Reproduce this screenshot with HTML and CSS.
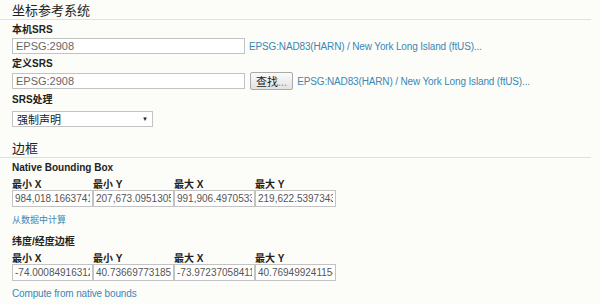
FILE: index.html
```html
<!DOCTYPE html>
<html lang="zh">
<head>
    <meta charset="UTF-8">
    <title>坐标参考系统</title>
    <link rel="stylesheet" href="styles.css">
</head>
<body>
    <div class="page">
        <h2 class="section-title">坐标参考系统</h2>
        <div class="section-body">
            <label class="field-label">本机SRS</label>
            <div class="srs-row">
                <input class="srs-input" type="text" value="EPSG:2908">
                <a class="link srs-link" href="#">EPSG:NAD83(HARN) / New York Long Island (ftUS)...</a>
            </div>

            <label class="field-label">定义SRS</label>
            <div class="srs-row">
                <input class="srs-input" type="text" value="EPSG:2908">
                <button class="find-btn">查找<span class="dots">...</span></button>
                <a class="link srs-link" href="#">EPSG:NAD83(HARN) / New York Long Island (ftUS)...</a>
            </div>

            <label class="field-label">SRS处理</label>
            <div class="select-box">
                <span>强制声明</span>
                <span class="arrow">▼</span>
            </div>
        </div>

        <h2 class="section-title bounds-title">边框</h2>
        <div class="section-body">
            <div class="field-label">Native Bounding Box</div>
            <div class="bbox">
                <div class="bbox-col">
                    <label class="field-label">最小 X</label>
                    <input class="bbox-input" type="text" value="984,018.16637415">
                </div>
                <div class="bbox-col">
                    <label class="field-label">最小 Y</label>
                    <input class="bbox-input" type="text" value="207,673.09513056">
                </div>
                <div class="bbox-col">
                    <label class="field-label">最大 X</label>
                    <input class="bbox-input" type="text" value="991,906.49705338">
                </div>
                <div class="bbox-col">
                    <label class="field-label">最大 Y</label>
                    <input class="bbox-input" type="text" value="219,622.53973435">
                </div>
            </div>
            <a class="link compute-link cjk" href="#">从数据中计算</a>

            <div class="field-label latlon-label">纬度/经度边框</div>
            <div class="bbox">
                <div class="bbox-col">
                    <label class="field-label">最小 X</label>
                    <input class="bbox-input" type="text" value="-74.000849163129">
                </div>
                <div class="bbox-col">
                    <label class="field-label">最小 Y</label>
                    <input class="bbox-input" type="text" value="40.736697731858">
                </div>
                <div class="bbox-col">
                    <label class="field-label">最大 X</label>
                    <input class="bbox-input" type="text" value="-73.97237058411">
                </div>
                <div class="bbox-col">
                    <label class="field-label">最大 Y</label>
                    <input class="bbox-input" type="text" value="40.769499241154">
                </div>
            </div>
            <a class="link compute-link" href="#">Compute from native bounds</a>
        </div>
    </div>
</body>
</html>
```

FILE: styles.css
```css
body {
    margin: 0;
    background-color: #fcfdf8;
    color: #333;
    font-family: "Liberation Sans", "Noto Sans CJK SC", sans-serif;
    font-size: 11px;
}
.page {
    width: 591px;
}
.section-title {
    margin: 0;
    padding: 3px 0 1px 12px;
    font-size: 13px;
    line-height: 15px;
    font-weight: normal;
    color: #222;
    border-bottom: 1px solid #e4e2cc;
}
.bounds-title {
    margin-top: 12px;
    padding-top: 2px;
}
.section-body {
    padding-left: 12px;
}
.field-label {
    display: block;
    margin-top: 3px;
    font-size: 10px;
    line-height: 14px;
    font-weight: bold;
    color: #222;
}
.srs-row {
    display: flex;
    align-items: center;
    margin-top: 1px;
}
.srs-input {
    width: 233px;
    height: 16px;
    box-sizing: border-box;
    margin: 0;
    padding: 0 3px;
    border: 1px solid #c3c3c3;
    background: #fff;
    color: #666;
    font-family: "Liberation Sans", sans-serif;
    font-size: 11px;
}
.link {
    color: #3d86b6;
    text-decoration: none;
    font-size: 10px;
    letter-spacing: -0.15px;
}
.srs-link {
    margin-left: 4px;
}
.find-btn {
    height: 18px;
    margin: 0 0 0 5px;
    padding: 0 5px;
    border: 1px solid #aaa;
    border-radius: 2px;
    background: linear-gradient(#fafafa, #e2e2e2);
    color: #222;
    font-family: "Noto Sans CJK SC", sans-serif;
    font-size: 11px;
    line-height: 16px;
}
.find-btn .dots {
    color: #999;
}
.select-box {
    display: flex;
    justify-content: space-between;
    align-items: center;
    width: 141px;
    height: 16px;
    box-sizing: border-box;
    margin-top: 4px;
    padding: 0 4px;
    border: 1px solid #c3c3c3;
    background: #fff;
    color: #222;
    font-size: 11px;
}
.select-box .arrow {
    font-size: 6px;
}
.bbox {
    display: flex;
}
.bbox-col {
    width: 81px;
}
.bbox-col .field-label {
    margin-top: 3px;
}
.bbox-input {
    width: 81px;
    height: 17px;
    box-sizing: border-box;
    margin: -2px 0 0;
    padding: 0 2px;
    border: 1px solid #c3c3c3;
    background: #fff;
    color: #555;
    font-family: "Liberation Sans", sans-serif;
    font-size: 10px;
}
.compute-link {
    display: block;
    margin-top: 6px;
    line-height: 14px;
}
.compute-link.cjk {
    font-size: 9px;
    letter-spacing: 0;
}
.latlon-label {
    margin-top: 8px;
}
```
